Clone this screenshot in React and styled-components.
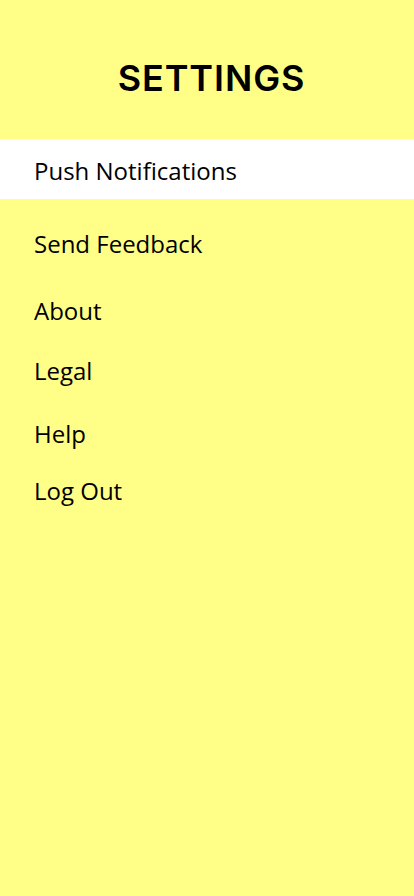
import React from 'react';
import styled, { createGlobalStyle } from 'styled-components';

const GlobalStyle = createGlobalStyle`
  html, body {
    margin: 0;
    padding: 0;
    background: #ffff88;
  }
  body {
    font-family: "Open Sans", "Noto Sans", sans-serif;
    color: #000;
  }
`;

const Screen = styled.div`
  width: 414px;
  min-height: 896px;
  background: #ffff88;
`;

const Header = styled.header`
  height: 139px;
  box-sizing: border-box;
  padding: 60px 0 0 9px;
  text-align: center;
`;

const Title = styled.h1`
  margin: 0;
  font-family: Inter, "Liberation Sans", sans-serif;
  font-weight: 600;
  font-size: 36px;
  line-height: 36px;
  letter-spacing: 0.9px;
`;

const Menu = styled.ul`
  list-style: none;
  margin: 0;
  padding: 0;
`;

const MenuItem = styled.li`
  box-sizing: border-box;
  margin-top: ${(p) => p.$gap || 0}px;
  padding: ${(p) => (p.$active ? '15.7px 34px 12.3px' : '0 34px')};
  height: ${(p) => (p.$active ? '60px' : 'auto')};
  background: ${(p) => (p.$active ? '#ffffff' : 'transparent')};
  font-size: 24px;
  line-height: 32px;
  cursor: pointer;
`;

const items = [
  { label: 'Push Notifications', active: true, gap: 0 },
  { label: 'Send Feedback', gap: 28.7 },
  { label: 'About', gap: 35 },
  { label: 'Legal', gap: 28 },
  { label: 'Help', gap: 31 },
  { label: 'Log Out', gap: 25 },
];

export default function App() {
  return (
    <>
      <GlobalStyle />
      <Screen>
        <Header>
          <Title>SETTINGS</Title>
        </Header>
        <Menu>
          {items.map((item) => (
            <MenuItem key={item.label} $active={item.active} $gap={item.gap}>
              {item.label}
            </MenuItem>
          ))}
        </Menu>
      </Screen>
    </>
  );
}
